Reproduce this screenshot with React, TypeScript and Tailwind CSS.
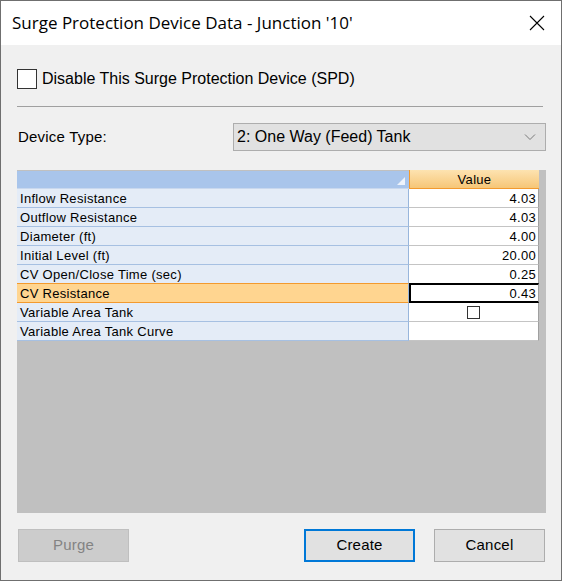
import React from 'react';

const rows = [
  { label: 'Inflow Resistance', value: '4.03' },
  { label: 'Outflow Resistance', value: '4.03' },
  { label: 'Diameter (ft)', value: '4.00' },
  { label: 'Initial Level (ft)', value: '20.00' },
  { label: 'CV Open/Close Time (sec)', value: '0.25' },
  { label: 'CV Resistance', value: '0.43', selected: true },
  { label: 'Variable Area Tank', value: '', check: true },
  { label: 'Variable Area Tank Curve', value: '' },
];

const font = { fontFamily: '"Liberation Sans", Arial, sans-serif' };

const App: React.FC = () => {
  return (
    <div
      className="w-[562px] h-[581px] border border-[#6f6f6f] bg-[#f0f0f0] flex flex-col text-black"
      style={font}
    >
      {/* title bar */}
      <div className="h-[44px] bg-white flex items-center justify-between pl-[11px] pr-[15px] shrink-0">
        <span className="text-[17px]" style={{ fontFamily: '"Open Sans", "Noto Sans", sans-serif' }}>
          Surge Protection Device Data - Junction '10'
        </span>
        <svg width="16" height="16" viewBox="0 0 16 16" className="mr-[1px]">
          <path d="M1 1 L15 15 M15 1 L1 15" stroke="#000" strokeWidth="1.1" fill="none" />
        </svg>
      </div>

      <div className="flex-1 flex flex-col pl-[16px] pr-[15px]">
        <div className="flex items-center mt-[24px] h-[20px]">
          <div className="w-[20px] h-[20px] border border-[#333] bg-white" />
          <span className="ml-[5px] text-[16px]">Disable This Surge Protection Device (SPD)</span>
        </div>

        <div className="mt-[17px] h-px bg-[#a0a0a0] mr-[3px]" />

        <div className="flex items-center mt-[16px]">
          <span className="w-[216px] pl-[1px] text-[15px] tracking-[0.2px]">Device Type:</span>
          <div className="flex-1 h-[28px] bg-[#e1e1e1] border border-[#adadad] flex items-center justify-between pl-[3px] pr-[9px]">
            <span className="text-[16px]">2: One Way (Feed) Tank</span>
            <svg width="12" height="8" viewBox="0 0 12 8">
              <path d="M1 1.5 L6 6.5 L11 1.5" stroke="#7a7a7a" strokeWidth="1" fill="none" />
            </svg>
          </div>
        </div>

        {/* grid */}
        <div className="mt-[19px] h-[343px] bg-[#c0c0c0] text-[13px] tracking-[0.3px]">
          <div className="w-[522px] flex flex-col">
            <div className="flex h-[19px]">
              <div className="w-[392px] mt-[1px] h-[18px] bg-[#a9c5eb] border-b border-[#c9d8ee] relative">
                <svg width="8" height="8" viewBox="0 0 8 8" className="absolute right-[4px] top-[6px]">
                  <path d="M8 0 L8 8 L0 8 Z" fill="#eef3fb" />
                </svg>
              </div>
              <div className="flex-1 h-[19px] bg-gradient-to-b from-[#fde3b0] to-[#f6c677] border-l border-b border-[#f39a2e] flex items-center justify-center pt-[1px]">
                Value
              </div>
            </div>
            {rows.map((r, i) => (
              <div key={i} className="flex h-[19px]">
                <div
                  className={`w-[392px] h-[19px] border-r border-[#98b6dc] pl-[3px] pt-[1px] flex items-center ${
                    r.selected
                      ? 'bg-[#ffd590] border-b border-b-[#f39a2e] border-t border-t-[#f39a2e] -mt-[1px] h-[20px]'
                      : 'bg-[#e4ecf7] border-b border-b-[#a6c0e2]'
                  }`}
                >
                  {r.label}
                </div>
                <div
                  className={`flex-1 h-[19px] bg-white border-r border-r-[#a0a0a0] flex items-center justify-end pr-[2px] pt-[1px] ${
                    r.selected ? 'border-2 border-black -mt-[1px] h-[20px]' : 'border-b border-b-[#c4c4c4]'
                  }`}
                >
                  {r.check ? (
                    <div className="w-[13px] h-[13px] border border-[#333] bg-white mr-[56px]" />
                  ) : (
                    r.value
                  )}
                </div>
              </div>
            ))}
          </div>
        </div>

        {/* buttons */}
        <div className="flex mt-[16px] text-[15px] tracking-[0.2px]">
          <button className="w-[111px] h-[33px] ml-[1px] bg-[#cccccc] border border-[#bfbfbf] text-[#838383]">
            Purge
          </button>
          <button className="w-[111px] h-[33px] ml-[175px] bg-[#e1e1e1] border-2 border-[#0078d7]">
            Create
          </button>
          <button className="w-[111px] h-[33px] ml-[19px] bg-[#e1e1e1] border border-[#adadad]">
            Cancel
          </button>
        </div>
      </div>
    </div>
  );
};

export default App;
